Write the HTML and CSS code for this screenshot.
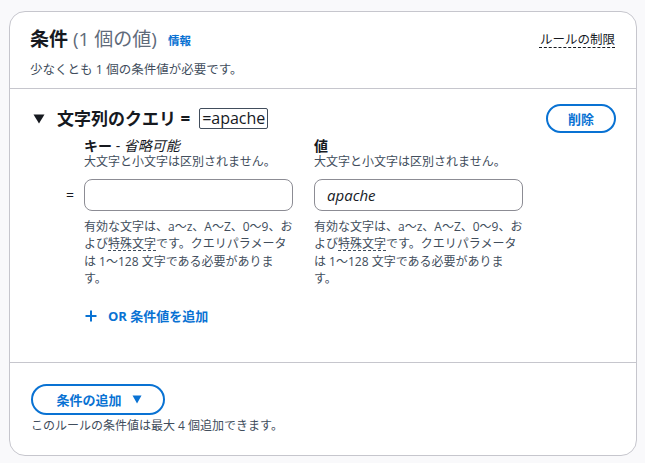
FILE: index.html
```html
<!DOCTYPE html>
<html lang="ja">
<head>
<meta charset="utf-8">
<link rel="stylesheet" href="styles.css">
</head>
<body>
<div class="card">
  <div class="card-header">
    <div class="title-row">
      <h2 class="title"><span class="title-main">条件</span> <span class="title-count">(1 個の値)</span> <a class="info">情報</a></h2>
      <span class="limits">ルールの制限</span>
    </div>
    <p class="subtitle">少なくとも 1 個の条件値が必要です。</p>
  </div>

  <div class="section">
    <div class="section-head">
      <div class="section-title">
        <svg class="caret" width="12" height="10" viewBox="0 0 12 10"><path d="M0.5 0.5 H11.5 L6 9.5 Z" fill="#16191f"/></svg>
        <span class="cond-name">文字列のクエリ =</span>
        <span class="cond-value">=apache</span>
      </div>
      <button class="btn-outline btn-delete">削除</button>
    </div>

    <div class="fields">
      <div class="field-label col-key">
        <div class="label"><b>キー</b> - <i>省略可能</i></div>
        <div class="desc">大文字と小文字は区別されません。</div>
      </div>
      <div class="field-label col-val">
        <div class="label"><b>値</b></div>
        <div class="desc">大文字と小文字は区別されません。</div>
      </div>

      <div class="op">=</div>
      <div class="input col-key"></div>
      <div class="input col-val">apache</div>

      <div class="constraint col-key">有効な文字は、a〜z、A〜Z、0〜9、および<span class="dashed">特殊文字</span>です。クエリパラメータは 1〜128 文字である必要があります。</div>
      <div class="constraint col-val">有効な文字は、a〜z、A〜Z、0〜9、および<span class="dashed">特殊文字</span>です。クエリパラメータは 1〜128 文字である必要があります。</div>

      <a class="add-or">
        <svg width="12" height="12" viewBox="0 0 12 12"><path d="M6 0.5 V11.5 M0.5 6 H11.5" stroke="#0972d3" stroke-width="2" fill="none"/></svg>
        <span>OR 条件値を追加</span>
      </a>
    </div>
  </div>

  <div class="card-footer">
    <button class="btn-outline btn-add">条件の追加
      <svg width="10" height="9" viewBox="0 0 10 9"><path d="M0.5 0.5 H9.5 L5 8.5 Z" fill="#0972d3"/></svg>
    </button>
    <p class="footer-note">このルールの条件値は最大 4 個追加できます。</p>
  </div>
</div>
</body>
</html>
```

FILE: styles.css
```css
* { box-sizing: border-box; }

body {
  margin: 0;
  background: #f9f9fb;
  font-family: "Open Sans", "Noto Sans CJK JP", sans-serif;
  color: #16191f;
}

.card {
  margin: 11px 0 0 9px;
  width: 628px;
  background: #ffffff;
  border: 1px solid #c6c6cd;
  border-radius: 16px;
}

.card-header {
  padding: 16px 20px 10px 20px;
  border-bottom: 1px solid #c6c6cd;
}

.title-row {
  display: flex;
  justify-content: space-between;
  align-items: center;
  height: 24px;
}

.title {
  margin: 0;
  font-size: 19px;
  line-height: 24px;
  font-weight: 400;
}

.title-main { font-weight: 700; }
.title-count { color: #5f6b7a; }

.info {
  font-size: 11.5px;
  font-weight: 700;
  color: #0972d3;
  margin-left: 6px;
  vertical-align: 1px;
}

.limits {
  font-size: 12.5px;
  line-height: 18px;
  color: #16191f;
  text-decoration: underline dashed #16191f;
  text-decoration-thickness: 1px;
  text-underline-offset: 3px;
  margin-right: 1px;
}

.subtitle {
  margin: 10px 0 0 0;
  font-size: 12.5px;
  line-height: 16px;
  color: #414d5c;
}

.section {
  padding: 15px 20px 38px 20px;
  border-bottom: 1px solid #c6c6cd;
}

.section-head {
  display: flex;
  justify-content: space-between;
  align-items: center;
}

.section-title {
  display: flex;
  align-items: center;
}

.caret {
  margin-left: 3px;
  margin-right: 12px;
}

.cond-name {
  font-size: 17px;
  font-weight: 700;
  line-height: 22px;
}

.cond-value {
  margin-left: 9px;
  border: 1px solid #414d5c;
  border-radius: 2px;
  padding: 0 2px;
  font-size: 16px;
  line-height: 19px;
}

.btn-outline {
  font-family: inherit;
  background: #ffffff;
  border: 2px solid #0972d3;
  border-radius: 20px;
  color: #0972d3;
  font-weight: 700;
  font-size: 13px;
  cursor: pointer;
}

.btn-delete {
  width: 70px;
  height: 29px;
  padding: 0;
}

.fields {
  margin: 5px 0 0 27px;
  display: grid;
  grid-template-columns: 27px 209px 21px 209px;
}

.col-key { grid-column: 2; }
.col-val { grid-column: 4; }

.label {
  font-size: 14px;
  line-height: 16px;
}

.label i { font-weight: 400; }

.desc {
  font-size: 12px;
  line-height: 16px;
  color: #414d5c;
}

.op {
  grid-column: 1;
  padding-left: 9px;
  font-size: 14px;
  line-height: 32px;
  margin-top: 9px;
}

.input {
  margin-top: 9px;
  height: 32px;
  border: 1px solid #8c8c94;
  border-radius: 8px;
  padding: 0 12px;
  font-size: 15px;
  line-height: 30px;
  font-style: italic;
  color: #16191f;
}

.constraint {
  margin-top: 7px;
  font-size: 12px;
  line-height: 17.4px;
  color: #414d5c;
}

.dashed {
  text-decoration: underline dashed #414d5c;
  text-decoration-thickness: 1px;
  text-underline-offset: 2px;
}

.add-or {
  grid-column: 2 / 5;
  margin-top: 20px;
  display: flex;
  align-items: center;
  gap: 11px;
  padding-left: 1px;
  color: #0972d3;
  font-size: 13px;
  font-weight: 700;
  line-height: 16px;
}

.card-footer {
  padding: 21px 20px 21px 21px;
}

.btn-add {
  width: 134px;
  height: 31px;
  display: flex;
  align-items: center;
  justify-content: center;
  gap: 10px;
  padding: 0 0 0 2px;
}

.footer-note {
  margin: 3px 0 0 0;
  font-size: 12px;
  line-height: 16px;
  color: #414d5c;
}
```
